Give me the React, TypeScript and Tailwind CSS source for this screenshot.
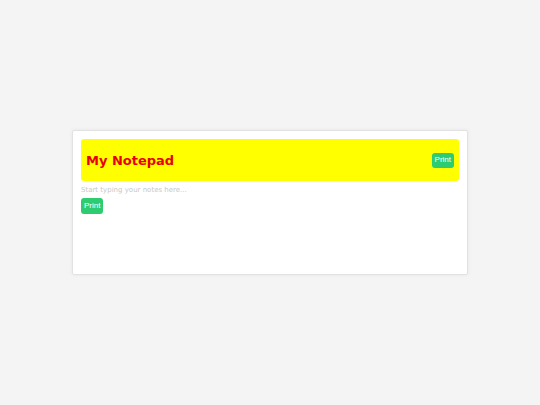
export default function App() {
  return (
    <div className="min-h-screen flex items-center justify-center bg-[#f4f4f4]" style={{ fontFamily: '"DejaVu Sans", sans-serif' }}>
      <div className="w-[396px] h-[145px] bg-white border border-[#e2e2e2] rounded-[2px] shadow-[0_0_4px_rgba(0,0,0,0.06)] p-2">
        <div className="h-[42px] bg-[#ffff00] rounded-[3px] flex items-center justify-between pl-[5px] pr-[5px]">
          <h1 className="text-[13px] font-bold text-[#e8000b] leading-none">My Notepad</h1>
          <button className="block h-[15px] px-[3px] bg-[#2ecc71] text-white text-[8px] rounded-[3px]" style={{ fontFamily: '"Liberation Sans", Arial, sans-serif' }}>
            Print
          </button>
        </div>
        <textarea
          className="block w-full h-[14px] mt-[2px] resize-none outline-none text-[7px] text-gray-700 placeholder:text-[#c8c8c8] leading-[14px] overflow-hidden"
          placeholder="Start typing your notes here..."
        />
        <button className="block mt-[1px] h-[16px] px-[3px] bg-[#2ecc71] text-white text-[8px] rounded-[3px]" style={{ fontFamily: '"Liberation Sans", Arial, sans-serif' }}>
          Print
        </button>
      </div>
    </div>
  )
}
